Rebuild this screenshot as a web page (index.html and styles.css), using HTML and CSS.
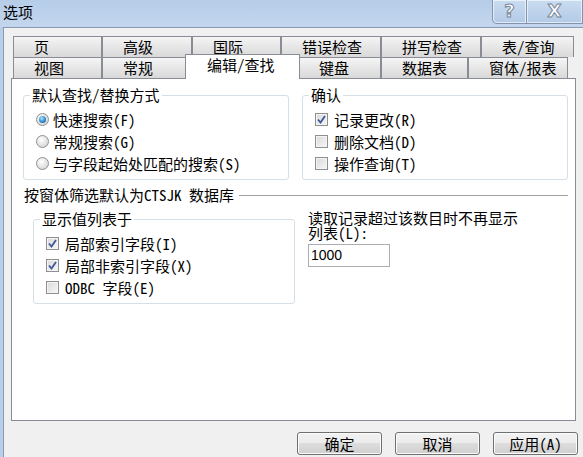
FILE: index.html
```html
<!DOCTYPE html>
<html lang="zh-CN">
<head>
  <meta charset="UTF-8">
  <title>选项</title>
  <link rel="stylesheet" href="styles.css">
</head>
<body>
  <div class="window">
    <div class="titlebar">
      <span class="title">选项</span>
      <div class="caption-btns">
        <span class="cap-btn help">?</span>
        <span class="cap-btn close">X</span>
      </div>
    </div>
    <div class="client">
      <div class="tabs">
        <div class="tab-row back">
          <div class="tab">页</div>
          <div class="tab">高级</div>
          <div class="tab">国际</div>
          <div class="tab">错误检查</div>
          <div class="tab">拼写检查</div>
          <div class="tab">表/查询</div>
        </div>
        <div class="tab-row front">
          <div class="tab">视图</div>
          <div class="tab">常规</div>
          <div class="tab active">编辑/查找</div>
          <div class="tab">键盘</div>
          <div class="tab">数据表</div>
          <div class="tab">窗体/报表</div>
        </div>
      </div>

      <div class="panel">
        <div class="row">
          <fieldset class="group">
            <legend>默认查找/替换方式</legend>
            <div class="opt"><span class="radio checked"></span>快速搜索(F)</div>
            <div class="opt"><span class="radio"></span>常规搜索(G)</div>
            <div class="opt"><span class="radio"></span>与字段起始处匹配的搜索(S)</div>
          </fieldset>
          <fieldset class="group">
            <legend>确认</legend>
            <div class="opt"><span class="check"><svg width="9" height="9" viewBox="0 0 9 9"><path d="M1 4.5 L3.5 7.5 L8 1" fill="none" stroke="#3d5799" stroke-width="1.8"/></svg></span>记录更改(R)</div>
            <div class="opt"><span class="check"></span>删除文档(D)</div>
            <div class="opt"><span class="check"></span>操作查询(T)</div>
          </fieldset>
        </div>

        <div class="section-title">按窗体筛选默认为CTSJK 数据库</div>

        <div class="row lower">
          <fieldset class="group list-group">
            <legend>显示值列表于</legend>
            <div class="opt"><span class="check"><svg width="9" height="9" viewBox="0 0 9 9"><path d="M1 4.5 L3.5 7.5 L8 1" fill="none" stroke="#3d5799" stroke-width="1.8"/></svg></span>局部索引字段(I)</div>
            <div class="opt"><span class="check"><svg width="9" height="9" viewBox="0 0 9 9"><path d="M1 4.5 L3.5 7.5 L8 1" fill="none" stroke="#3d5799" stroke-width="1.8"/></svg></span>局部非索引字段(X)</div>
            <div class="opt"><span class="check"></span>ODBC 字段(E)</div>
          </fieldset>
          <div class="limit">
            <div class="limit-text">读取记录超过该数目时不再显示列表(L):</div>
            <div class="textbox">1000</div>
          </div>
        </div>
      </div>

      <div class="buttons">
        <div class="btn">确定</div>
        <div class="btn">取消</div>
        <div class="btn">应用(A)</div>
      </div>
    </div>
  </div>
</body>
</html>
```

FILE: styles.css
```css
body {
  margin: 0;
  width: 583px;
  height: 457px;
  overflow: hidden;
  font-family: "Noto Sans Mono CJK SC", "Noto Sans CJK SC", sans-serif;
  font-size: 15px;
  color: #000;
  background: #b9cfe9;
}
.window { display: flex; flex-direction: column; height: 457px; }

.titlebar {
  height: 27px;
  display: flex;
  align-items: flex-start;
  background: linear-gradient(#b6cde8, #c3d6ed);
}
.title { padding: 2px 0 0 3px; line-height: 20px; font-size: 15px; }
.caption-btns { margin-left: auto; display: flex; }
.cap-btn {
  height: 24px;
  box-sizing: border-box;
  border: 1px solid #8193ad;
  border-top: none;
  background: linear-gradient(#c9dcf1, #b3cae6);
  box-shadow: inset 0 0 0 1px rgba(255,255,255,0.6);
  color: #fff;
  font-family: "DejaVu Sans", sans-serif;
  font-weight: bold;
  font-size: 18px;
  line-height: 22px;
  text-align: center;
  -webkit-text-stroke: 1px #7a8596;
}
.help { width: 35px; border-radius: 0 0 0 5px; }
.close { width: 56px; border-left: none; }

.client {
  flex: 1;
  margin-left: 3px;
  border-left: 1px solid #8a9ab2;
  border-top: 1px solid #8a9ab2;
  background: #f0f0f0;
  padding: 8px 7px 0 7px;
}

.tabs { margin-left: 2px; }
.tab-row { display: grid; }
.back { grid-template-columns: 89px 90px 89px 100px 100px 93px; }
.front { grid-template-columns: 89px 85px 111px 83px 87px 100px; }
.tab {
  box-sizing: border-box;
  height: 21px;
  border: 1px solid #898c95;
  border-bottom: none;
  padding: 1px 0 0 20px;
  line-height: 18px;
  background: linear-gradient(#f5f5f5, #e6e6e6 50%, #d9d9d9);
  white-space: nowrap;
}
.tab.active {
  position: relative;
  z-index: 1;
  height: 25px;
  margin: -3px -2px -1px -2px;
  padding-left: 21px;
  background: #fff;
}

.panel {
  box-sizing: border-box;
  height: 343px;
  border: 1px solid #898c95;
  background: #fff;
  padding: 7px 7px 0 11px;
}
.row { display: flex; gap: 13px; }

.group {
  box-sizing: border-box;
  width: 266px;
  height: 94px;
  margin: 0;
  padding: 0 0 5px 12px;
  border: 1px solid #d5dfe5;
  border-radius: 3px;
}
.group legend {
  margin-left: -6px;
  padding: 0 2px;
  line-height: 18px;
}
.opt {
  display: flex;
  align-items: center;
  height: 22px;
  white-space: nowrap;
}
.group legend + .opt { margin-top: 4px; }

.radio {
  box-sizing: border-box;
  width: 13px;
  height: 13px;
  margin-right: 4px;
  border: 1px solid #8e8f8f;
  border-radius: 50%;
  background: radial-gradient(circle at 40% 35%, #fff, #e0e0e0 60%, #c9c9c9);
  display: flex;
  align-items: center;
  justify-content: center;
}
.radio.checked::after {
  content: "";
  width: 7px;
  height: 7px;
  border-radius: 50%;
  background: radial-gradient(circle at 40% 35%, #aee4fb, #2e8ad0 55%, #114f86);
}
.check {
  box-sizing: border-box;
  width: 13px;
  height: 13px;
  margin-right: 6px;
  border: 1px solid #8e8f8f;
  background: linear-gradient(135deg, #d9d9d9, #f7f7f7);
  box-shadow: inset 0 0 0 1px #f4f4f4;
  display: flex;
  align-items: center;
  justify-content: center;
}

.section-title {
  display: flex;
  align-items: center;
  gap: 5px;
  margin: 6px 0 0 1px;
  line-height: 18px;
}
.section-title::after {
  content: "";
  flex: 1;
  border-top: 1px solid #a0a0a0;
}

.lower { margin-top: 6px; }
.list-group { width: 262px; margin-left: 10px; }

.limit { width: 216px; }
.limit-text { line-height: 15px; }
.textbox {
  box-sizing: border-box;
  width: 82px;
  height: 23px;
  margin-top: 4px;
  border: 1px solid #abadb3;
  padding-left: 2px;
  font-family: "Liberation Sans", sans-serif;
  font-size: 14px;
  line-height: 21px;
}

.buttons {
  display: flex;
  justify-content: flex-end;
  gap: 13px;
  margin: 11px -2px 0 0;
}
.btn {
  box-sizing: border-box;
  width: 85px;
  height: 23px;
  border: 1px solid #707070;
  border-radius: 3px;
  background: linear-gradient(#f2f2f2, #ebebeb 50%, #dddddd 50%, #cfcfcf);
  box-shadow: inset 0 0 0 1px #fbfbfb;
  text-align: center;
  line-height: 21px;
}
```
